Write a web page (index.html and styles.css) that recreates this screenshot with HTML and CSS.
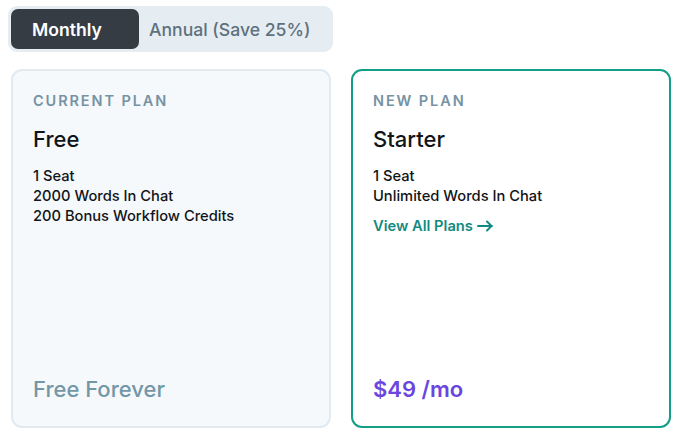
FILE: index.html
```html
<!DOCTYPE html>
<html lang="en">
<head>
<meta charset="utf-8">
<link rel="stylesheet" href="styles.css">
</head>
<body>
<div class="page">
  <div class="toggle">
    <button class="opt active">Monthly</button>
    <button class="opt">Annual (Save 25%)</button>
  </div>
  <div class="cards">
    <div class="card current">
      <div class="label">CURRENT PLAN</div>
      <div class="name">Free</div>
      <ul class="features">
        <li>1 Seat</li>
        <li>2000 Words In Chat</li>
        <li>200 Bonus Workflow Credits</li>
      </ul>
      <div class="price muted">Free Forever</div>
    </div>
    <div class="card new">
      <div class="label">NEW PLAN</div>
      <div class="name">Starter</div>
      <ul class="features">
        <li>1 Seat</li>
        <li>Unlimited Words In Chat</li>
      </ul>
      <a class="link" href="#">View All Plans <svg class="arrow" width="17" height="12" viewBox="0 0 17 12"><path d="M1 6h14M10 1.5l4.5 4.5L10 10.5" fill="none" stroke="currentColor" stroke-width="1.9" stroke-linecap="round" stroke-linejoin="round"/></svg></a>
      <div class="price accent">$49 /mo</div>
    </div>
  </div>
</div>
</body>
</html>
```
FILE: styles.css
```css
* { box-sizing: border-box; }
html, body { margin: 0; padding: 0; background: #fff; }
body { font-family: Inter, "Noto Sans", sans-serif; color: #111418; }
.page { padding: 6px 14px 0 8px; }
.toggle {
  display: inline-flex;
  padding: 3px;
  background: #e5edf2;
  border-radius: 9px;
  width: 325px;
  height: 46px;
}
.opt {
  border: 0;
  background: transparent;
  font-family: inherit;
  font-size: 17.6px;
  font-weight: 500;
  color: #5f717e;
  padding: 0 10px;
  height: 40px;
  border-radius: 7px;
  cursor: pointer;
  text-align: left;
}
.opt.active {
  background: #353c43;
  color: #fff;
  font-weight: 600;
  width: 128px;
  padding-left: 21px;
}
.cards {
  display: grid;
  grid-template-columns: 320px 320px;
  gap: 20px;
  margin-top: 17px;
  margin-left: 3px;
}
.card {
  height: 359px;
  border-radius: 11px;
  padding: 20px 20px 23px;
  display: flex;
  flex-direction: column;
}
.card.current { background: #f5f9fb; border: 2px solid #e2eaf0; }
.card.new { background: #fff; border: 2px solid #139e88; }
.label {
  font-size: 14.5px;
  line-height: 20px;
  font-weight: 600;
  letter-spacing: 1.9px;
  color: #7693a3;
}
.name {
  font-size: 22px;
  line-height: 28px;
  font-weight: 500;
  margin-top: 14px;
  color: #111418;
}
.features {
  list-style: none;
  margin: 13px 0 0;
  padding: 0;
  font-size: 14.7px;
  line-height: 20px;
  font-weight: 500;
}
.link {
  margin-top: 10px;
  font-size: 14.7px;
  line-height: 20px;
  font-weight: 600;
  color: #138a80;
  text-decoration: none;
  display: inline-flex;
  align-items: center;
  gap: 4px;
}
.arrow { display: block; }
.price {
  margin-top: auto;
  font-size: 22px;
  line-height: 28px;
  font-weight: 600;
}
.price.muted { color: #7497a8; font-weight: 500; }
.price.accent { color: #6a45e0; }
```
